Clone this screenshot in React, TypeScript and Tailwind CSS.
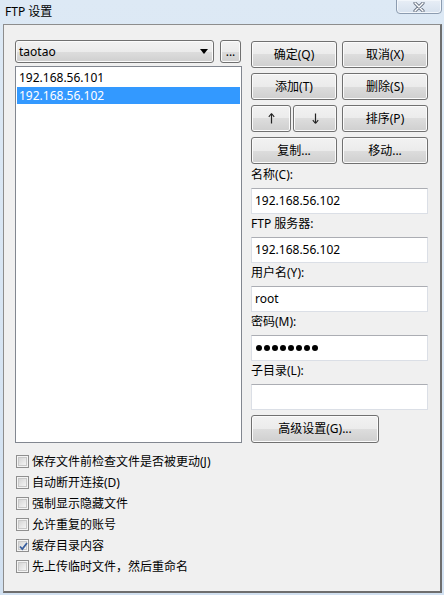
import React from "react";

const font = "font-['Noto_Sans','Noto_Sans_CJK_SC',sans-serif]";

const btnCls =
  "flex items-center justify-center rounded-[3px] border border-[#707070] bg-[linear-gradient(to_bottom,#f2f2f2_0%,#ebebeb_50%,#dddddd_50%,#cfcfcf_100%)] shadow-[inset_0_0_0_1px_#fbfbfb] text-[12px] text-black";

function Btn({ children, className = "" }: { children?: React.ReactNode; className?: string }) {
  return <div className={`${btnCls} ${className}`}>{children}</div>;
}

function Field({ label, children }: { label: string; children?: React.ReactNode }) {
  return (
    <>
      <div className="h-[20px] leading-[20px] text-[12px] text-black">{label}</div>
      <div className="mt-[3px] flex h-[26px] items-center border border-[#dbdfe6] border-t-[#abadb3] bg-white pl-[3px] text-[12px] text-black">
        {children}
      </div>
    </>
  );
}

function Check({ label, checked = false }: { label: string; checked?: boolean }) {
  return (
    <div className="flex h-[21px] items-center">
      <div className="relative flex h-[13px] w-[13px] items-center justify-center border border-[#8f8f8f] bg-[#f4f4f4]">
        <div className="h-[9px] w-[9px] border border-[#c9c9c9] bg-[linear-gradient(135deg,#d6d6d6_0%,#f4f4f4_100%)]" />
        {checked && (
          <svg className="absolute left-[1px] top-[1px]" width="11" height="11" viewBox="0 0 11 11">
            <path d="M2 5.5 L4.3 8 L9 2" fill="none" stroke="#3a5f9e" strokeWidth="1.8" />
          </svg>
        )}
      </div>
      <span className="ml-[3px] text-[12px] text-black">{label}</span>
    </div>
  );
}

function Arrow({ down = false }: { down?: boolean }) {
  return (
    <svg width="7" height="11" viewBox="0 0 7 11" className={down ? "rotate-180" : ""}>
      <path d="M3.5 1 V10.5" stroke="#222" strokeWidth="1.2" />
      <path d="M3.5 0.5 L0.8 3.8 M3.5 0.5 L6.2 3.8" stroke="#222" strokeWidth="1.1" fill="none" />
    </svg>
  );
}

export default function App() {
  return (
    <div className={`relative h-[595px] w-[444px] overflow-hidden bg-[linear-gradient(to_bottom,#dde9f5,#d2e1f1)] ${font}`}>
      {/* title bar */}
      <div className="flex h-[24px] items-center pl-[5px] text-[12px] text-black">FTP 设置</div>
      {/* close button */}
      <div className="absolute left-[396px] top-[-1px] flex h-[15px] w-[46px] items-center justify-center rounded-b-[4px] border border-[#8c9cb0] bg-[linear-gradient(to_bottom,#e8eef6,#d6e1ee)] shadow-[inset_0_0_0_1px_#f2f6fb]">
        <svg width="12" height="10" viewBox="0 0 12 10">
          <path d="M2 1 L10 9 M10 1 L2 9" stroke="#6c7686" strokeWidth="3.2" strokeLinecap="round" />
          <path d="M2 1 L10 9 M10 1 L2 9" stroke="#ffffff" strokeWidth="1.4" strokeLinecap="round" />
        </svg>
      </div>

      {/* client area */}
      <div className="ml-[3px] h-[569px] w-[439px] border-l border-t border-r-2 border-b-2 border-l-[#8d8d8d] border-t-[#8d8d8d] border-r-[#6e6e6e] border-b-[#6e6e6e] bg-[#f0f0f0] pl-[11px] pt-[15px]">
        <div className="flex gap-[9px]">
          {/* left column */}
          <div className="flex w-[227px] flex-col">
            <div className="flex h-[23px]">
              <Btn className="w-[199px] !justify-between pl-[3px] pr-[5px]">
                <span>taotao</span>
                <svg width="8" height="5" viewBox="0 0 8 5">
                  <path d="M0 0 H8 L4 5 Z" fill="#000" />
                </svg>
              </Btn>
              <Btn className="ml-[6px] w-[21px] items-end pb-[4px] leading-none">...</Btn>
            </div>
            <div className="mt-[3px] h-[377px] border border-[#828790] bg-white px-[1px] pt-[2px] text-[12px]">
              <div className="flex h-[18px] items-center pl-[2px] text-black">192.168.56.101</div>
              <div className="flex h-[17px] items-center bg-[#3399ff] pl-[2px] text-white">192.168.56.102</div>
            </div>
          </div>

          {/* right column */}
          <div className="flex w-[177px] flex-col pt-[1px]">
            <div className="grid grid-cols-2 gap-x-[5px] gap-y-[5px]">
              <Btn className="h-[27px]">确定(Q)</Btn>
              <Btn className="h-[27px]">取消(X)</Btn>
              <Btn className="h-[27px]">添加(T)</Btn>
              <Btn className="h-[27px]">删除(S)</Btn>
              <div className="flex gap-[2px]">
                <Btn className="h-[27px] w-[40px]">
                  <Arrow />
                </Btn>
                <Btn className="h-[27px] w-[44px]">
                  <Arrow down />
                </Btn>
              </div>
              <Btn className="h-[27px]">排序(P)</Btn>
              <Btn className="h-[27px]">复制...</Btn>
              <Btn className="h-[27px]">移动...</Btn>
            </div>
            <div className="mt-[1px]" />
            <Field label="名称(C):">192.168.56.102</Field>
            <Field label="FTP 服务器:">192.168.56.102</Field>
            <Field label="用户名(Y):">root</Field>
            <Field label="密码(M):">
              <div className="flex gap-[2px] pl-[1px]">
                {Array.from({ length: 8 }).map((_, i) => (
                  <div key={i} className="h-[6px] w-[6px] rounded-full bg-black" />
                ))}
              </div>
            </Field>
            <Field label="子目录(L):" />
            <Btn className="mt-[5px] h-[28px] w-[128px]">高级设置(G)...</Btn>
          </div>
        </div>

        <div className="mt-[8px] flex flex-col pl-[1px]">
          <Check label="保存文件前检查文件是否被更动(J)" />
          <Check label="自动断开连接(D)" />
          <Check label="强制显示隐藏文件" />
          <Check label="允许重复的账号" />
          <Check label="缓存目录内容" checked />
          <Check label="先上传临时文件，然后重命名" />
        </div>
      </div>
    </div>
  );
}
